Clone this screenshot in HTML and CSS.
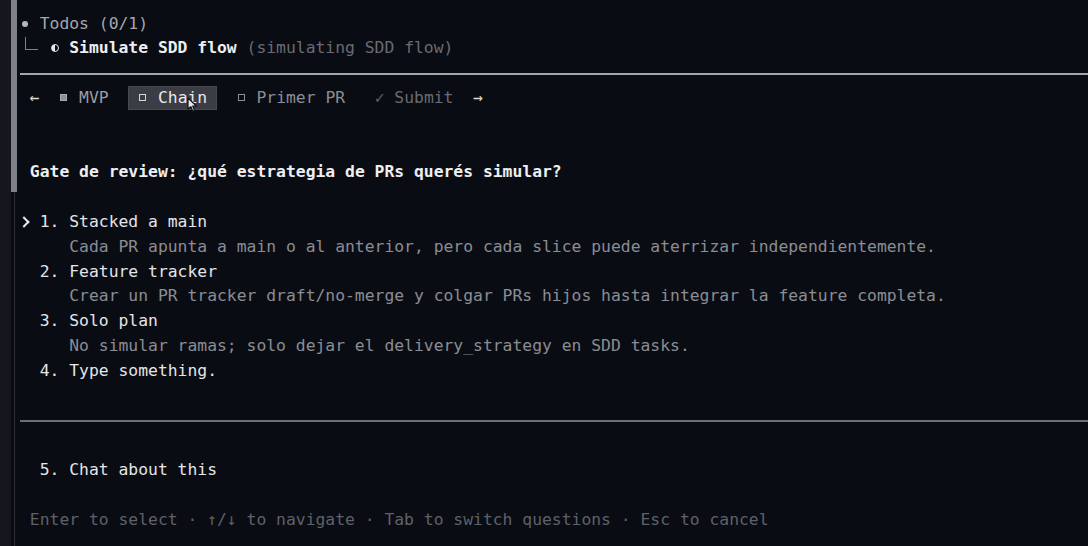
FILE: index.html
```html
<!DOCTYPE html>
<html lang="es">
<head>
<meta charset="utf-8">
<title>SDD flow</title>
<link rel="stylesheet" href="styles.css">
</head>
<body>
<div class="screen">
  <div class="gutter">
    <div class="strip"></div>
    <div class="rail"><div class="rail-top"></div><div class="rail-bottom"></div></div>
  </div>
  <div class="term">
    <div class="row"><span class="cell"><span class="dot"></span></span> <span class="gray">Todos (0/1)</span></div>
    <div class="row"><span class="cell"><span class="corner"></span></span>  <span class="cell"><span class="half"></span></span> <span class="strong">Simulate SDD flow</span> <span class="muted">(simulating SDD flow)</span></div>
    <div class="row rule-row"><div class="rule light"></div></div>
    <div class="row"> <span class="cell arrow">←</span>  <span class="cell"><span class="sq filled"></span></span> <span class="tab-mvp">MVP</span>  <span class="active"> <span class="cell"><span class="sq"></span></span> Chain </span>  <span class="cell"><span class="sq dim"></span></span> <span class="tab-dim">Primer PR</span>   <span class="cell check">✓</span> <span class="tab-off">Submit</span>  <span class="cell arrow">→</span></div>
    <div class="row"></div>
    <div class="row"></div>
    <div class="row"> <span class="strong">Gate de review: ¿qué estrategia de PRs querés simular?</span></div>
    <div class="row"></div>
    <div class="row"><span class="cell"><span class="chev"></span></span> 1. Stacked a main</div>
    <div class="row desc">     Cada PR apunta a main o al anterior, pero cada slice puede aterrizar independientemente.</div>
    <div class="row">  2. Feature tracker</div>
    <div class="row desc">     Crear un PR tracker draft/no-merge y colgar PRs hijos hasta integrar la feature completa.</div>
    <div class="row">  3. Solo plan</div>
    <div class="row desc">     No simular ramas; solo dejar el delivery_strategy en SDD tasks.</div>
    <div class="row">  4. Type something.</div>
    <div class="row"></div>
    <div class="row rule-row"><div class="rule"></div></div>
    <div class="row"></div>
    <div class="row">  5. Chat about this</div>
    <div class="row"></div>
    <div class="row footer"> Enter to select · ↑/↓ to navigate · Tab to switch questions · Esc to cancel</div>
  </div>
  <svg class="cursor" width="11" height="16" viewBox="0 0 11 16" aria-hidden="true">
    <path d="M1 1 L1 12 L3.8 9.6 L5.8 14.2 L7.6 13.4 L5.7 9 L9.4 9 Z" fill="#e6e7ea" stroke="#111318" stroke-width="1.2" stroke-linejoin="round"/>
  </svg>
</div>
</body>
</html>
```

FILE: styles.css
```css
html, body {
  margin: 0;
  padding: 0;
  background: #0a0c14;
}

.screen {
  position: relative;
  display: flex;
  width: 1088px;
  height: 546px;
  overflow: hidden;
  background: #0a0c14;
}

.gutter {
  display: flex;
  width: 20px;
  flex: none;
}

.strip {
  width: 11px;
  background: #15171d;
}

.rail {
  width: 6px;
  display: flex;
  flex-direction: column;
}

.rail-top {
  height: 192px;
  background: #7e8187;
}

.rail-bottom {
  flex: 1;
  margin-left: 3px;
  width: 1px;
  background: #2c2f36;
}

.term {
  flex: 1;
  padding-top: 11.6px;
  font-family: "DejaVu Sans Mono", "Liberation Mono", monospace;
  font-size: 16.38px;
  color: #e4e5e8;
}

.row {
  height: 24.8px;
  line-height: 24.8px;
  white-space: pre;
}

.cell {
  display: inline-block;
  width: 1ch;
  text-align: center;
  vertical-align: top;
  height: 24.8px;
  position: relative;
}

.dot {
  position: absolute;
  left: 2px;
  top: 9px;
  width: 6px;
  height: 6px;
  border-radius: 50%;
  background: #b4b6bb;
}

.corner {
  position: absolute;
  left: 5px;
  top: 1px;
  width: 12px;
  height: 12px;
  border-left: 1.5px solid #80838a;
  border-bottom: 1.5px solid #80838a;
}

.half {
  position: absolute;
  left: 1px;
  top: 8px;
  width: 6px;
  height: 6px;
  border-radius: 50%;
  border: 1.5px solid #e6e7ea;
  background: linear-gradient(90deg, #e6e7ea 50%, transparent 50%);
}

.chev {
  position: absolute;
  left: 0;
  top: 8px;
  width: 6px;
  height: 6px;
  border-top: 2px solid #e6e7ea;
  border-right: 2px solid #e6e7ea;
  transform: rotate(45deg);
}

.gray { color: #a5a7ac; }
.strong { font-weight: bold; color: #eeeff1; }
.muted { color: #686b72; }

.rule-row {
  display: flex;
  align-items: center;
}

.rule {
  width: 100%;
  height: 2px;
  background: #6b6e75;
}

.rule.light {
  background: #a3a6ac;
}

.arrow { color: #d8d9dc; }

.sq {
  position: absolute;
  left: 1px;
  top: 8px;
  width: 5px;
  height: 5px;
  border: 1.5px solid #d4d5d8;
}

.sq.filled {
  background: #8d9095;
  border-color: #a7a9ae;
}

.sq.dim {
  border-color: #8d9095;
}

.tab-mvp { color: #9b9da3; }

.active {
  display: inline-block;
  background: #3a3d44;
  box-shadow: inset 0 0 0 1px #464950;
  color: #e8e9eb;
  height: 24px;
  line-height: 24px;
  margin-top: 0.4px;
  vertical-align: top;
}

.tab-dim { color: #8b8d93; }
.check { color: #5f6268; }
.tab-off { color: #686b71; }

.desc { color: #8a8d93; }

.footer { color: #5e6167; }

.cursor {
  position: absolute;
  left: 187px;
  top: 97px;
}
```
